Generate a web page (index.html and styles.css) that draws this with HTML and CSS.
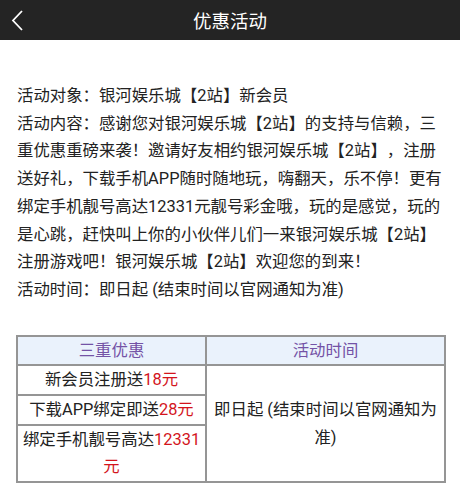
FILE: index.html
```html
<!DOCTYPE html>
<html lang="zh-CN">
<head>
    <meta charset="UTF-8">
    <meta name="viewport" content="width=device-width, initial-scale=1.0">
    <title>优惠活动</title>
    <link rel="stylesheet" href="styles.css">
</head>
<body>
    <div class="header">
        <a class="back" href="#">
            <svg width="16" height="26" viewBox="0 0 16 26">
                <polyline points="11,4 2,13.5 11,23" fill="none" stroke="#fff" stroke-width="1.8"/>
            </svg>
        </a>
        <div class="title">优惠活动</div>
    </div>

    <div class="content">
        <p>活动对象：银河娱乐城【2站】新会员</p>
        <p>活动内容：感谢您对银河娱乐城【2站】的支持与信赖，三重优惠重磅来袭！邀请好友相约银河娱乐城【2站】，注册送好礼，下载手机APP随时随地玩，嗨翻天，乐不停！更有绑定手机靓号高达12331元靓号彩金哦，玩的是感觉，玩的是心跳，赶快叫上你的小伙伴儿们一来银河娱乐城【2站】注册游戏吧！银河娱乐城【2站】欢迎您的到来！</p>
        <p>活动时间：即日起 (结束时间以官网通知为准)</p>

        <table class="promo">
            <tr>
                <th class="col-a">三重优惠</th>
                <th>活动时间</th>
            </tr>
            <tr>
                <td>新会员注册送<span class="red">18元</span></td>
                <td rowspan="3" class="time">即日起 (结束时间以官网通知为准)</td>
            </tr>
            <tr>
                <td>下载APP绑定即送<span class="red">28元</span></td>
            </tr>
            <tr>
                <td>绑定手机靓号高达<span class="red">12331<wbr>元</span></td>
            </tr>
        </table>
    </div>
</body>
</html>
```

FILE: styles.css
```css
*{
    box-sizing: border-box;
}
body{
    margin: 0;
    background-color: #fff;
    font-family: Roboto, "Noto Sans CJK SC", sans-serif;
    color: #222;
    text-spacing-trim: space-all;
}
.header{
    height: 40px;
    background-color: #242424;
    display: flex;
    align-items: center;
    justify-content: center;
    position: relative;
}
.back{
    position: absolute;
    left: 11px;
    top: 7px;
    display: block;
    height: 26px;
}
.title{
    color: #fff;
    font-size: 18.5px;
}
.content{
    padding: 42px 13px 0 17px;
    font-size: 16.4px;
    line-height: 27.7px;
}
.content p{
    margin: 0;
}
.promo{
    margin-top: 31px;
    margin-left: -1px;
    width: 430px;
    border-collapse: collapse;
    text-align: center;
}
.promo th, .promo td{
    border: 2px solid #959595;
    padding: 0 3px;
    font-weight: normal;
    line-height: 27.7px;
}
.promo th{
    background-color: #eaf2fc;
    color: #7453a6;
}
.col-a{
    width: 189px;
}
.red{
    color: #d3141c;
}
```
